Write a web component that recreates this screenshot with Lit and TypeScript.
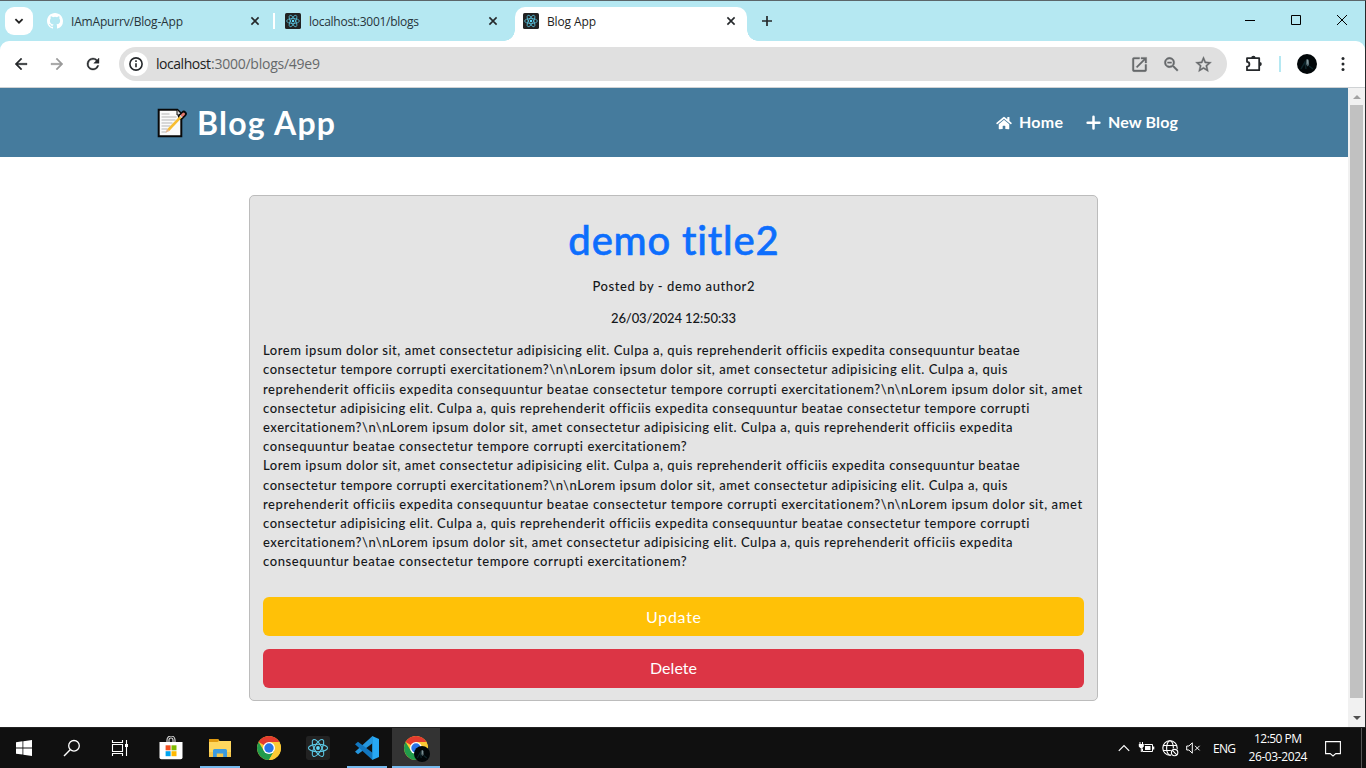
import { LitElement, html, css, svg } from "lit";
import { customElement, property } from "lit/decorators.js";

/** Single line of text whose tracking is adjusted to fill a given width. */
@customElement("fit-text")
class FitText extends LitElement {
  @property() text = "";
  @property({ type: Number }) width = 100;
  static styles = css`
    :host { display: block; flex: none; }
    .line { display: inline-block; white-space: pre; }
  `;
  render() {
    return html`<span class="line">${this.text}</span>`;
  }
  firstUpdated() {
    const el = this.renderRoot.querySelector(".line") as HTMLElement;
    const natural = el.getBoundingClientRect().width;
    const gap = (this.width - natural) / Math.max(1, this.text.length - 1);
    el.style.letterSpacing = `${gap.toFixed(3)}px`;
    el.style.marginRight = `${(-gap).toFixed(3)}px`;
  }
}

const t = (text: string, width: number) => html`<fit-text .text=${text} .width=${width}></fit-text>`;

const atom = svg`
  <g fill="none" stroke="#5cc8e4" stroke-width="1.1">
    <ellipse cx="12" cy="12" rx="9.6" ry="3.7"/>
    <ellipse cx="12" cy="12" rx="9.6" ry="3.7" transform="rotate(60 12 12)"/>
    <ellipse cx="12" cy="12" rx="9.6" ry="3.7" transform="rotate(120 12 12)"/>
  </g><circle cx="12" cy="12" r="1.9" fill="#61dafb"/>`;
const reactIcon = (s: number) => html`<svg width=${s} height=${s} viewBox="0 0 24 24"><rect width="24" height="24" rx="2.4" fill="#222"/>${atom}</svg>`;
const closeIcon = html`<svg width="10" height="10" viewBox="0 0 10 10"><path d="M1.4 1.4l7.2 7.2M8.6 1.4L1.4 8.6" stroke="#25282b" stroke-width="1.6"/></svg>`;
const github = html`<svg width="16" height="16" viewBox="0 0 16 16"><path fill="#fff" d="M8 0C3.58 0 0 3.58 0 8c0 3.54 2.29 6.53 5.47 7.59.4.07.55-.17.55-.38 0-.19-.01-.82-.01-1.49-2.01.37-2.53-.49-2.69-.94-.09-.23-.48-.94-.82-1.13-.28-.15-.68-.52-.01-.53.63-.01 1.08.58 1.23.82.72 1.21 1.87.87 2.33.66.07-.52.28-.87.51-1.07-1.78-.2-3.64-.89-3.64-3.95 0-.87.31-1.59.82-2.15-.08-.2-.36-1.02.08-2.12 0 0 .67-.21 2.2.82a7.6 7.6 0 014 0c1.53-1.04 2.2-.82 2.2-.82.44 1.1.16 1.92.08 2.12.51.56.82 1.27.82 2.15 0 3.07-1.87 3.75-3.65 3.95.29.25.54.73.54 1.48 0 1.07-.01 1.93-.01 2.2 0 .21.15.46.55.38A8 8 0 0016 8c0-4.42-3.58-8-8-8z"/></svg>`;
const mat = (d: string, size = 20, color = "#25282b") => html`<svg width=${size} height=${size} viewBox="0 0 24 24"><path d=${d} fill=${color} stroke=${color} stroke-width=".5"/></svg>`;

const BACK = "M20 11H7.8l5.6-5.6L12 4l-8 8 8 8 1.4-1.4L7.8 13H20z";
const FORWARD = "M4 11h12.2l-5.6-5.6L12 4l8 8-8 8-1.4-1.4 5.6-5.6H4z";
const RELOAD = "M17.65 6.35A7.96 7.96 0 0 0 12 4a8 8 0 1 0 7.73 10h-2.08A6 6 0 1 1 12 6c1.66 0 3.14.69 4.22 1.78L13 11h7V4z";
const OPEN = "M19 19H5V5h7V3H5a2 2 0 0 0-2 2v14a2 2 0 0 0 2 2h14a2 2 0 0 0 2-2v-7h-2zM14 3v2h3.6l-9.85 9.85 1.4 1.4L19 6.4V10h2V3z";
const ZOOM = "M15.5 14h-.8l-.27-.27A6.5 6.5 0 1 0 13.73 14.43l.27.28v.79l5 5L20.5 19zM9.5 14a4.5 4.5 0 1 1 0-9 4.5 4.5 0 0 1 0 9zM7 8.7h5v1.6H7z";
const STAR = "M22 9.24l-7.19-.62L12 2 9.19 8.63 2 9.24l5.46 4.73L5.82 21 12 17.27 18.18 21l-1.63-7.03zM12 15.4l-3.76 2.27 1-4.28-3.32-2.88 4.38-.38L12 6.1l1.71 4.04 4.38.38-3.32 2.88 1 4.28z";
const HOME = "M280.37 148.26L96 300.11V464a16 16 0 0 0 16 16l112.06-.29a16 16 0 0 0 15.92-16V368a16 16 0 0 1 16-16h64a16 16 0 0 1 16 16v95.64a16 16 0 0 0 16 16.05L464 480a16 16 0 0 0 16-16V300L295.67 148.26a12.19 12.19 0 0 0-15.3 0zM571.6 251.47L488 182.56V44.05a12 12 0 0 0-12-12h-56a12 12 0 0 0-12 12v72.61L318.47 43a48 48 0 0 0-61 0L4.34 251.47a12 12 0 0 0-1.6 16.9l25.5 31A12 12 0 0 0 45.15 301l235.22-193.74a12.19 12.19 0 0 1 15.3 0L530.9 301a12 12 0 0 0 16.9-1.6l25.5-31a12 12 0 0 0-1.7-16.93z";

const chromeIcon = html`<svg width="24" height="24" viewBox="0 0 24 24">
  <circle cx="12" cy="12" r="12" fill="#fcc934"/>
  <path d="M12 12 L1.61 6 A12 12 0 0 1 22.39 6 L12 6.5z" fill="#e33b2e"/>
  <path d="M1.61 6A12 12 0 0 0 12 24L17.2 15 12 12 7 15z" fill="#219b4b"/>
  <path d="M12 6h10.39A12 12 0 0 1 12 24l5.2-9z" fill="#fcc934"/>
  <circle cx="12" cy="12" r="6" fill="#fff"/><circle cx="12" cy="12" r="4.7" fill="#2874e8"/></svg>`;
const avatar = (s: number) => html`<svg width=${s} height=${s} viewBox="0 0 20 20"><circle cx="10" cy="10" r="10" fill="#020709"/><path d="M4 15l4-7 1 7M12 12l4 3" stroke="#0d2429" stroke-width="1.5" fill="none"/><path d="M9.2 5.5q2-1.3 2.7 1.2l.2 4.2-1.6 1.5-1.5-2.2z" fill="#53686d"/><path d="M10.5 5.8l.3 4" stroke="#9aaeb2" stroke-width=".8"/></svg>`;

const LINES: [string, number][] = [
  ["Lorem ipsum dolor sit, amet consectetur adipisicing elit. Culpa a, quis reprehenderit officiis expedita consequuntur beatae", 756],
  ["consectetur tempore corrupti exercitationem?\\n\\nLorem ipsum dolor sit, amet consectetur adipisicing elit. Culpa a, quis", 745],
  ["reprehenderit officiis expedita consequuntur beatae consectetur tempore corrupti exercitationem?\\n\\nLorem ipsum dolor sit, amet", 819],
  ["consectetur adipisicing elit. Culpa a, quis reprehenderit officiis expedita consequuntur beatae consectetur tempore corrupti", 766],
  ["exercitationem?\\n\\nLorem ipsum dolor sit, amet consectetur adipisicing elit. Culpa a, quis reprehenderit officiis expedita", 749],
  ["consequuntur beatae consectetur tempore corrupti exercitationem?", 424],
];

@customElement("app-root")
class AppRoot extends LitElement {
  static styles = css`
    :host { display: flex; flex-direction: column; width: 1366px; height: 768px; overflow: hidden; background: #fff; font-family: "Open Sans", "Noto Sans", sans-serif; }
    * { box-sizing: border-box; }
    svg { display: block; flex: none; }
    .window { display: flex; flex-direction: column; height: 727px; border-top: 1px solid #5b666a; border-right: 1px solid #26292a; background: #b5e8f2; }
    .tabs { display: flex; height: 40px; padding: 6px 0 0 5px; flex: none; font-size: 12px; color: #27343a; }
    .search { width: 28px; height: 28px; border-radius: 9px; background: #fff; display: grid; place-items: center; margin-right: 6px; }
    .tab { width: 238px; height: 28px; display: flex; align-items: center; padding: 0 17px 0 8px; gap: 8px; }
    .tab.active { position: relative; width: 232px; height: 34px; padding: 0 11px 6px 8px; background: #fff; border-radius: 10px 10px 0 0; color: #222; }
    .tab.active::before, .tab.active::after { content: ""; position: absolute; bottom: 0; width: 11px; height: 11px; }
    .tab.active::before { left: -11px; background: radial-gradient(circle at 0 0, transparent 10.5px, #fff 11px); }
    .tab.active::after { right: -11px; background: radial-gradient(circle at 100% 0, transparent 10.5px, #fff 11px); }
    .grow { flex: 1; }
    .div { width: 2px; height: 16px; background: #fff; margin: 6px 0 0 -4px; }
    .div + .tab { margin-left: 2px; }
    .plus { margin: 8px 0 0 14px; }
    .controls { display: flex; gap: 34px; padding: 7px 17px 0 0; }
    .toolbar { height: 47px; flex: none; background: #fff; border-radius: 9px 9px 0 0; border-bottom: 1px solid #cfd2d4; display: flex; align-items: center; padding: 0 13px 0 12px; }
    .nav3 { display: flex; gap: 18px; width: 107px; flex: none; }
    .omni { width: 1108px; height: 34px; border-radius: 17px; background: #e0e0e0; display: flex; align-items: center; padding: 0 14px 0 5px; font-size: 14px; color: #1d1d1d; }
    .omni fit-text { margin-top: -1px; }
    .info { width: 24px; height: 24px; border-radius: 50%; background: #fff; display: grid; place-items: center; margin-right: 8px; }
    .path { color: #66696b; }
    .acts { display: flex; gap: 13px; }
    .tools { display: flex; align-items: center; padding-left: 17px; }
    .sep { width: 2px; height: 16px; background: #b5e8f2; margin: 0 16px 0 15px; }
    .kebab { margin-left: 24px; margin-right: -10px; }
    .view { display: flex; height: 639px; background: #fff; }
    .page { width: 1348px; font-family: Lato, "Open Sans", sans-serif; display: flex; flex-direction: column; align-items: center; }
    .header { width: 100%; height: 69px; background: #457b9d; color: #fff; display: flex; align-items: center; padding: 0 170px 0 157px; font-weight: 700; font-size: 16px; }
    .brand { display: flex; align-items: center; gap: 10px; font-size: 32px; line-height: 40px; }
    .link { display: flex; align-items: center; gap: 7px; }
    .link fit-text { margin-top: -2px; }
    .link + .link { margin-left: 23px; }
    .card { width: 849px; height: 506px; margin: 38px 0 0 -1px; border: 1px solid #bcbcbc; border-radius: 5px; background: #e4e4e4; padding: 13px; display: flex; flex-direction: column; align-items: center; color: #14171a; font-size: 13px; font-weight: 500; }
    .title { color: #0d6efd; font-size: 40px; line-height: 48px; margin: 7px 0 13px; height: 48px; -webkit-text-stroke: 0.6px currentColor; }
    .meta { line-height: 19px; height: 19px; margin-bottom: 13px; }
    .body { align-self: stretch; height: 230px; padding-top: 0.25px; margin-bottom: 26px; }
    .body fit-text { height: 19.2px; line-height: 19.2px; }
    .btn { align-self: stretch; height: 39px; flex: none; border-radius: 6px; color: #fff; font-size: 16px; font-weight: 400; display: flex; align-items: center; justify-content: center; }
    .update { background: #ffc107; margin-bottom: 13px; }
    .delete { background: #dc3545; padding-bottom: 2px; }
    .scroll { width: 17px; background: #f1f1f1; display: flex; flex-direction: column; align-items: center; }
    .arrow { height: 17px; width: 17px; display: grid; place-items: center; }
    .thumb { width: 13px; height: 593px; background: #c1c1c1; margin-bottom: 11px; }
    .taskbar { height: 41px; background: #101010; border-top: 1px solid #222; display: flex; color: #fff; font-size: 12px; flex: none; }
    .cell { width: 48px; height: 40px; display: grid; place-items: center; position: relative; }
    .app { width: 49px; }
    .first { margin-left: 2px; }
    .run::after { content: ""; position: absolute; left: 5px; right: 4px; bottom: 0; height: 2px; background: #76b9ed; }
    .current { width: 48px; background: #333; margin-left: 1px; }
    .current::after { left: 0; right: 0; }
    .badge { position: absolute; left: 22px; top: 18px; }
    .tray { display: flex; align-items: center; }
    .battery { margin-left: 8px; }
    .globe { margin-left: 7px; }
    .speaker { margin-left: 7px; }
    .lang { margin-left: 12px; }
    .clock { display: flex; flex-direction: column; align-items: center; width: 60px; line-height: 18px; margin: 0 17px 0 12px; }
    .edge { width: 1px; height: 40px; background: #555; margin: 0 4px 0 20px; }
  `;

  renderTabs() {
    return html`<div class="tabs">
      <div class="search"><svg width="10" height="10" viewBox="0 0 10 10"><path d="M1.4 3.2L5 6.7l3.6-3.5" fill="none" stroke="#222" stroke-width="1.8"/></svg></div>
      <div class="tab">${github}${t("IAmApurrv/Blog-App", 112)}<span class="grow"></span>${closeIcon}</div>
      <div class="div"></div>
      <div class="tab">${reactIcon(16)}${t("localhost:3001/blogs", 110)}<span class="grow"></span>${closeIcon}</div>
      <div class="tab active">${reactIcon(16)}${t("Blog App", 49)}<span class="grow"></span>${closeIcon}</div>
      <svg class="plus" width="12" height="12" viewBox="0 0 12 12"><path d="M6 1v10M1 6h10" stroke="#25282b" stroke-width="1.7"/></svg>
      <span class="grow"></span>
      <div class="controls">
        <svg width="12" height="12" viewBox="0 0 12 12"><path d="M1 6.5h10" stroke="#000"/></svg>
        <svg width="12" height="12" viewBox="0 0 12 12"><path d="M1.5 1.5h9v9h-9z" fill="none" stroke="#000"/></svg>
        <svg width="12" height="12" viewBox="0 0 12 12"><path d="M1 1l10 10M11 1L1 11" stroke="#000"/></svg>
      </div>
    </div>`;
  }

  renderToolbar() {
    return html`<div class="toolbar">
      <div class="nav3">${mat(BACK, 18)}${mat(FORWARD, 18, "#9a9a9a")}${mat(RELOAD, 18)}</div>
      <div class="omni">
        <div class="info"><svg width="16" height="16" viewBox="0 0 16 16"><circle cx="8" cy="8" r="6.1" fill="none" stroke="#25282b" stroke-width="1.6"/><path d="M8 7.2v4M8 4.3v1.6" stroke="#25282b" stroke-width="1.6"/></svg></div>
        ${t("localhost", 55)}<span class="path">${t(":3000/blogs/49e9", 109)}</span>
        <span class="grow"></span>
        <div class="acts">${mat(OPEN, 19, "#66696b")}${mat(ZOOM, 19, "#66696b")}${mat(STAR, 19, "#66696b")}</div>
      </div>
      <div class="tools">
        <svg width="20" height="20" viewBox="0 0 20 20"><path d="M3 4.2h12.2v12H3v-3.6a2.4 2.4 0 0 0 0-4.8z" fill="none" stroke="#25282b" stroke-width="1.8" stroke-linejoin="round"/><path d="M7.2 4a2.2 2.2 0 0 1 4.4 0zM15.7 8a2.1 2.1 0 0 1 0 4.2z" fill="#25282b"/></svg>
        <span class="sep"></span>${avatar(20)}
        <svg class="kebab" width="4" height="16" viewBox="0 0 4 16"><g fill="#25282b"><circle cx="2" cy="2.6" r="1.5"/><circle cx="2" cy="8" r="1.5"/><circle cx="2" cy="13.4" r="1.5"/></g></svg>
      </div>
    </div>`;
  }

  renderPage() {
    return html`<div class="page">
      <div class="header">
        <div class="brand">
          <svg width="30" height="30" viewBox="0 0 30 30">
            <path d="M1.7 1.7h18.6l4 4v22.6H1.7z" fill="#fafafa" stroke="#080808" stroke-width="2"/>
            <path d="M4.5 6h8M4.5 9h15M4.5 12h14M4.5 15h11M4.5 18h9M4.5 21h6M4.5 24h5" stroke="#b5b5b5"/>
            <path d="M20 2v5h5" fill="#ddd" stroke="#111"/>
            <path d="M24 8.6l2.8-2.8" stroke="#080808" stroke-width="6" stroke-linecap="round"/>
            <path d="M11.3 22L24.3 8.4" stroke="#f7bd32" stroke-width="2.6"/>
            <path d="M23.6 9l1.2-1.3" stroke="#ccd" stroke-width="3"/>
            <path d="M25.3 7.3l1.3-1.3" stroke="#e5786b" stroke-width="2.8" stroke-linecap="round"/>
            <path d="M8.5 24.8l1.6-4 2.3 2.2z" fill="#e2b28d"/>
          </svg>
          ${t("Blog App", 138)}
        </div>
        <span class="grow"></span>
        <div class="link"><svg width="16" height="14" viewBox="0 0 576 512"><path fill="#fff" d=${HOME}></path></svg>${t("Home", 44)}</div>
        <div class="link"><svg width="15" height="15" viewBox="0 0 15 15"><path d="M7.5 1.8v11.8M1.6 7.7h11.8" stroke="#fff" stroke-width="2.5" stroke-linecap="round"/></svg>${t("New Blog", 70)}</div>
      </div>
      <div class="card">
        <div class="title">${t("demo title2", 211)}</div>
        <div class="meta">${t("Posted by - demo author2", 162)}</div>
        <div class="meta">${t("26/03/2024 12:50:33", 125)}</div>
        <div class="body">${[...LINES, ...LINES].map(([s, w]) => t(s, w))}</div>
        <div class="btn update">${t("Update", 55)}</div>
        <div class="btn delete">${t("Delete", 47)}</div>
      </div>
    </div>`;
  }

  renderTaskbar() {
    return html`<div class="taskbar">
      <div class="cell"><svg width="16" height="16" viewBox="0 0 16 16"><path d="M0 2.2l6.5-.9v6.2H0zM7.3 1.2L16 0v7.5H7.3zM0 8.4h6.5v6.2L0 13.7zM7.3 8.4H16V16l-8.7-1.2z" fill="#fff"/></svg></div>
      <div class="cell"><svg width="18" height="18" viewBox="0 0 18 18"><circle cx="11" cy="6.8" r="5.3" fill="none" stroke="#fff" stroke-width="1.3"/><path d="M7.2 10.8L1 17" stroke="#fff" stroke-width="1.4"/></svg></div>
      <div class="cell"><svg width="18" height="18" viewBox="0 0 18 18"><path d="M1.5 1v2.5h10V1M1.5 17v-2.5h10V17M1.5 5.5h10v7h-10zM15.5 1v16" fill="none" stroke="#fff" stroke-width="1.1"/><path d="M14 5h3v3h-3z" fill="#fff"/></svg></div>
      <div class="cell app first"><svg width="24" height="24" viewBox="0 0 24 24"><path d="M8 6V4a4 4 0 0 1 8 0v2M10 6V4a2 2 0 0 1 4 0v2" fill="none" stroke="#ddd" stroke-width="1.1"/><path d="M.5 6h23v15.5a1.8 1.8 0 0 1-1.8 1.8H2.3a1.8 1.8 0 0 1-1.8-1.8z" fill="#fff"/><path d="M6.6 9.3h5v5h-5z" fill="#f25022"/><path d="M12.5 9.3h5v5h-5z" fill="#7fba00"/><path d="M6.6 15.2h5v5h-5z" fill="#00a4ef"/><path d="M12.5 15.2h5v5h-5z" fill="#ffb900"/></svg></div>
      <div class="cell app run"><svg width="22" height="20" viewBox="0 0 22 20"><path d="M0 1h9l1.5 2H22v16H0z" fill="#ffd75e"/><path d="M0 1h9l1.2 1.8L8.5 4H0z" fill="#e09a10"/><path d="M0 14h22v5H0z" fill="#f5c64c"/><path d="M4 19v-6.5A1.5 1.5 0 0 1 5.5 11h11a1.5 1.5 0 0 1 1.5 1.5V19h-3.8v-3.5H7.8V19z" fill="#3c9be0"/></svg></div>
      <div class="cell app">${chromeIcon}</div>
      <div class="cell app">${reactIcon(24)}</div>
      <div class="cell app run"><svg width="24" height="24" viewBox="0 0 24 24"><path d="M17.5 0v7.2L3 18.2 0 15.8z" fill="#2596de"/><path d="M17.5 24v-7.2L3 5.8 0 8.2z" fill="#1277c0"/><path d="M17.2 0L24 3v18l-6.8 3z" fill="#27a8f5"/></svg></div>
      <div class="cell run current">${chromeIcon}<span class="badge">${avatar(16)}</span></div>
      <span class="grow"></span>
      <div class="tray">
        <svg width="12" height="8" viewBox="0 0 12 8"><path d="M.8 6.8L6 1.5l5.2 5.3" fill="none" stroke="#fff" stroke-width="1.2"/></svg>
        <svg class="battery" width="17" height="14" viewBox="0 0 17 14"><path d="M6.5 3.5h8v7h-10v-3" fill="none" stroke="#fff"/><path d="M15 5.5h1.3v3H15zM7 5h5.5v4H7z" fill="#fff"/><path d="M.8 3h5v2.5L4.4 7H2.2L.8 5.5zM1.5 1h1v2h-1zM4 1h1v2H4zM2.8 7h1v4h-1z" fill="#fff"/></svg>
        <svg class="globe" width="17" height="17" viewBox="0 0 17 17"><g fill="none" stroke="#fff" stroke-width="1.1"><circle cx="8" cy="8" r="7.2"/><ellipse cx="8" cy="8" rx="3.4" ry="7.2"/><path d="M1 5.5h14M1 10.5h10"/></g><circle cx="12.6" cy="12.6" r="4.4" fill="#101010"/><g fill="none" stroke="#fff" stroke-width="1.1"><circle cx="12.6" cy="12.6" r="3.2"/><path d="M10.4 10.4l4.4 4.4"/></g></svg>
        <svg class="speaker" width="15" height="12" viewBox="0 0 15 12"><path d="M.7 4h2.2L6.3.8v10.4L2.9 8H.7z" fill="none" stroke="#fff"/><path d="M9 3.8l4.6 4.6M13.6 3.8L9 8.4" stroke="#fff"/></svg>
        <span class="lang">${t("ENG", 23)}</span>
        <div class="clock">${t("12:50 PM", 48)}${t("26-03-2024", 59)}</div>
        <svg width="16" height="17" viewBox="0 0 16 17"><path d="M.6 1.6h14.8v12h-4.6L8 16l-2.8-2.4H.6z" fill="none" stroke="#fff" stroke-width="1.1"/></svg>
        <span class="edge"></span>
      </div>
    </div>`;
  }

  render() {
    return html`
      <div class="window">
        ${this.renderTabs()} ${this.renderToolbar()}
        <div class="view">
          ${this.renderPage()}
          <div class="scroll">
            <div class="arrow"><svg width="8" height="4" viewBox="0 0 8 4"><path d="M0 4l4-4 4 4z" fill="#a3a3a3"/></svg></div>
            <div class="thumb"></div>
            <div class="arrow"><svg width="8" height="4" viewBox="0 0 8 4"><path d="M0 0l4 4 4-4z" fill="#505050"/></svg></div>
          </div>
        </div>
      </div>
      ${this.renderTaskbar()}
    `;
  }
}
